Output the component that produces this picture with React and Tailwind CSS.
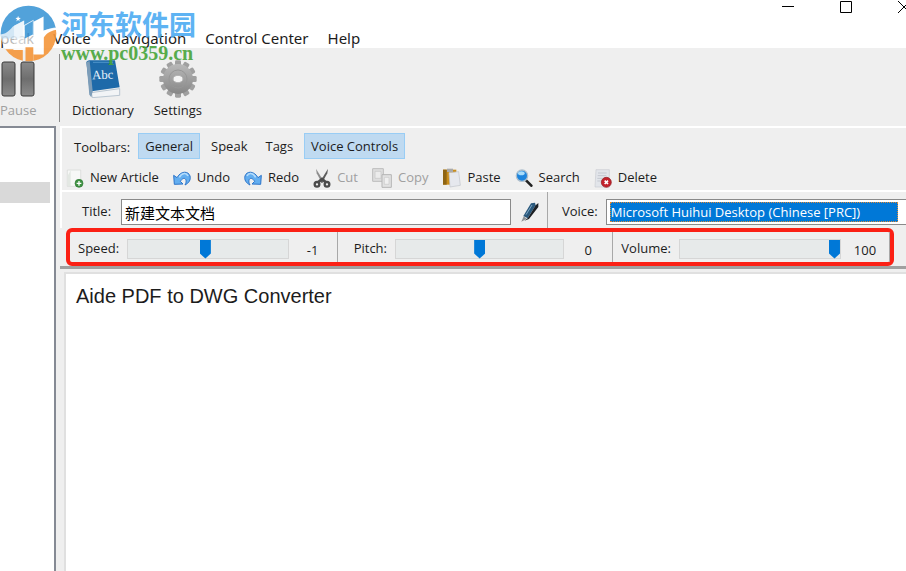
import React, { useState } from 'react';

const NewArticleIcon = () => (
  <svg viewBox="0 0 54 57" className="h-[19px] w-[18px] shrink-0">
    <path d="M4 3H44V52H4z" fill="#f7f8f7" stroke="#d3d6d3" strokeWidth="2" />
    <path d="M5 51V20L14 4v47z" fill="#e3e8e3" />
    <circle cx="39" cy="43" r="12" fill="#3f9142" stroke="#2f7a35" strokeWidth="2" />
    <path d="M39 36v14M32 43h14" stroke="#fff" strokeWidth="4" />
  </svg>
);

const UndoIcon = ({ flipped }) => (
  <svg viewBox="0 0 54 48" className="h-4 w-[18px] shrink-0">
    <g transform={flipped ? 'translate(54 0) scale(-1 1)' : undefined}>
      <path
        d="M2 16L4 43L30 42L22 34C27 26 34 22 38 28C41 34 39 39 36 45C48 39 54 29 51 18C47 4 25 0 12 23z"
        fill="#63aef0"
        stroke="#2c74c9"
        strokeWidth="3"
        strokeLinejoin="round"
      />
      <path d="M19 22C27 8 40 7 45 18" fill="none" stroke="#b5dcfb" strokeWidth="5" />
    </g>
  </svg>
);

const CutIcon = () => (
  <svg viewBox="0 0 54 60" className="h-5 w-[18px] shrink-0">
    <path d="M9 2L33 41L27 45L11 16z" fill="#8d8d8d" />
    <path d="M45 2L21 41L27 45L43 16z" fill="#5c5c5c" />
    <circle cx="12" cy="49" r="7" fill="none" stroke="#4c4c4c" strokeWidth="7" />
    <circle cx="42" cy="49" r="7" fill="none" stroke="#4c4c4c" strokeWidth="7" />
    <path d="M16 42l11-9 11 9" fill="none" stroke="#4c4c4c" strokeWidth="8" />
  </svg>
);

const CopyIcon = () => (
  <svg viewBox="0 0 60 60" className="size-5 shrink-0">
    <path d="M2 2H34V40H2z" fill="#dedede" stroke="#bcbcbc" strokeWidth="3" />
    <path d="M9 10h18v21H9z" fill="#ececec" stroke="#c4c4c4" strokeWidth="2" />
    <path d="M30 20H58V58H30z" fill="#e2e2e2" stroke="#b5b5b5" strokeWidth="3" />
    <path d="M37 28h14v21H37z" fill="#f0f0f0" stroke="#c8c8c8" strokeWidth="2" />
  </svg>
);

const PasteIcon = () => (
  <svg viewBox="0 0 57 60" className="h-5 w-[19px] shrink-0">
    <path d="M3 5H43V50H3z" fill="#c98d1c" />
    <path d="M3 5H14V50H3z" fill="#8f6514" />
    <path d="M15 2h18v10H15z" fill="#a9a9a9" />
    <path d="M21 14L50 11L55 52L24 57z" fill="#e6e8ee" stroke="#bfc2ca" strokeWidth="2" />
  </svg>
);

const SearchIcon = () => (
  <svg viewBox="0 0 54 54" className="size-[18px] shrink-0">
    <path d="M31 32L49 50" stroke="#222" strokeWidth="8" strokeLinecap="round" />
    <circle cx="21" cy="20" r="17" fill="#1d84dc" stroke="#aebfcd" strokeWidth="4" />
    <ellipse cx="19" cy="13" rx="10" ry="6" fill="#a9dcfa" />
  </svg>
);

const DeleteIcon = () => (
  <svg viewBox="0 0 54 57" className="h-[19px] w-[18px] shrink-0">
    <path d="M6 2H46V54H3z" fill="#e2e5ea" stroke="#c8ccd2" strokeWidth="2" />
    <path d="M12 12h26M11 20h26M10 28h16M10 36h12" stroke="#c3c7cf" strokeWidth="3" />
    <circle cx="37" cy="40" r="15" fill="#c3222c" stroke="#8e1a20" strokeWidth="2" />
    <path d="M32 35l10 10M42 35l-10 10" stroke="#fff" strokeWidth="5" />
  </svg>
);

const PenIcon = () => (
  <svg viewBox="0 0 54 60" className="h-5 w-[18px] shrink-0">
    <path d="M1 59L8 43L17 50z" fill="#8c9094" />
    <path d="M7 42L30 4L42 2L44 10L20 49z" fill="#2a587c" />
    <path d="M20 49L44 10L52 3V15L24 51L10 56z" fill="#1c1f24" />
    <path d="M15 38L33 9" stroke="#7fa7c4" strokeWidth="3" />
  </svg>
);

const PauseIcon = () => (
  <svg viewBox="0 0 36 38" className="h-[38px] w-9">
    <defs>
      <linearGradient id="pauseFill" x1="0" y1="0" x2="0" y2="1">
        <stop offset="0" stopColor="#8a8a8a" />
        <stop offset="0.5" stopColor="#6e6e6e" />
        <stop offset="1" stopColor="#8c8c8c" />
      </linearGradient>
    </defs>
    <rect x="2" y="2" width="13" height="34" rx="2" fill="url(#pauseFill)" stroke="#3b3b3b" />
    <rect x="21" y="2" width="13" height="34" rx="2" fill="url(#pauseFill)" stroke="#3b3b3b" />
  </svg>
);

const DictionaryIcon = () => (
  <svg viewBox="0 0 108 114" className="h-[38px] w-9">
    <path d="M19 98L104 86V106L22 113z" fill="#f2f4f6" stroke="#9fb0bf" strokeWidth="2" />
    <path d="M4 6C8 2 12 1 18 1H90L104 82L20 94L15 104z" fill="#1e6aa9" />
    <path d="M4 6L14 3L23 94L19 112L13 104z" fill="#7d9db8" />
    <path d="M24 7H84" stroke="#4d93c9" strokeWidth="3" />
    <text x="22" y="58" fontSize="38" fontFamily="Liberation Serif, serif" fill="#e6f2fb" transform="rotate(-2 22 58)">
      Abc
    </text>
  </svg>
);

const SettingsIcon = () => (
  <svg viewBox="-57 -57 114 114" className="size-[38px]">
    <defs>
      <linearGradient id="gearFill" x1="0" y1="0" x2="0" y2="1">
        <stop offset="0" stopColor="#b9b9b9" />
        <stop offset="1" stopColor="#868686" />
      </linearGradient>
    </defs>
    {[0, 30, 60, 90, 120, 150].map((angle) => (
      <rect key={angle} x="-9" y="-56" width="18" height="112" rx="4" fill="#a0a0a0" transform={`rotate(${angle})`} />
    ))}
    <circle r="45" fill="url(#gearFill)" />
    <circle r="27" fill="none" stroke="#979797" strokeWidth="3" />
    <ellipse rx="15" ry="11" fill="#f4f4f4" stroke="#b0b0b0" strokeWidth="3" />
  </svg>
);

const Watermark = () => (
  <div className="pointer-events-none absolute top-[5px] left-0 flex gap-1 opacity-90">
    <svg viewBox="0 0 170 170" className="size-[57px]">
      <defs>
        <clipPath id="logoClip">
          <circle cx="85" cy="85" r="83" />
        </clipPath>
      </defs>
      <g clipPath="url(#logoClip)">
        <path d="M0 0H170V68C140 72 118 80 98 92V60L72 76V100H0z" fill="#4098d6" />
        <path d="M0 88C26 86 30 70 42 62L72 46V135H0z" fill="#fff" fillOpacity="0.75" />
        <path d="M68 62L100 44V92C118 80 140 70 170 66V80L130 96V135H68z" fill="#fff" fillOpacity="0.8" />
        <path d="M74 62L98 48V88L74 100z" fill="#4098d6" />
        <path d="M0 132H40V170H0zM40 134H68V170H40zM76 126H100V170H76z" fill="#f5963a" />
        <path d="M130 98C140 82 155 76 170 74V170H100V146H130z" fill="#f5963a" />
        <path d="M100 50L130 34V148H100z" fill="#fff" />
        <path d="M42 62L72 46V134H42z" fill="#fff" fillOpacity="0.6" />
        <path d="M54 32l2 6 6 1-5 4 2 6-5-4-6 4 3-6-5-4 6-1z" fill="#fff" />
      </g>
    </svg>
    <div className="flex flex-col">
      <span className="font-['Noto_Sans_CJK_SC',sans-serif] text-[27px] leading-[38px] font-bold text-[#4dabf2]">河东软件园</span>
      <span className="font-['Liberation_Serif',serif] text-[20px] leading-5 font-bold text-[#47a53a]">www.pc0359.cn</span>
    </div>
  </div>
);

const actions = [
  { label: 'New Article', icon: <NewArticleIcon /> },
  { label: 'Undo', icon: <UndoIcon /> },
  { label: 'Redo', icon: <UndoIcon flipped /> },
  { label: 'Cut', icon: <CutIcon />, disabled: true },
  { label: 'Copy', icon: <CopyIcon />, disabled: true },
  { label: 'Paste', icon: <PasteIcon /> },
  { label: 'Search', icon: <SearchIcon /> },
  { label: 'Delete', icon: <DeleteIcon /> },
];

const VoiceSlider = ({ id, label, min, max, value, onChange, className = 'pl-2' }) => (
  <div className={`flex items-center border-r border-[#a8a8a8] pt-1 ${className}`}>
    <label htmlFor={id}>{label}:</label>
    <input
      id={id}
      type="range"
      min={min}
      max={max}
      value={value}
      onChange={(e) => onChange(Number(e.target.value))}
      className="ml-2 h-5 min-w-0 flex-1 appearance-none border border-[#d6d6d6] bg-[#e7eaea] [&::-webkit-slider-thumb]:h-[19px] [&::-webkit-slider-thumb]:w-[11px] [&::-webkit-slider-thumb]:appearance-none [&::-webkit-slider-thumb]:bg-[#0078d7] [&::-webkit-slider-thumb]:[clip-path:polygon(0_0,100%_0,100%_74%,50%_100%,0_74%)]"
    />
    <output htmlFor={id} className="w-12 pt-1 text-center">
      {value}
    </output>
  </div>
);

const App = () => {
  const [toolbars, setToolbars] = useState({ General: true, Speak: false, Tags: false, 'Voice Controls': true });
  const [title, setTitle] = useState('新建文本文档');
  const [speed, setSpeed] = useState(-1);
  const [pitch, setPitch] = useState(0);
  const [volume, setVolume] = useState(100);
  const [text, setText] = useState('Aide PDF to DWG Converter');

  const toggleToolbar = (name) => setToolbars({ ...toolbars, [name]: !toolbars[name] });

  return (
    <div className="relative flex h-screen flex-col overflow-hidden bg-[#efefef] font-['Open_Sans','Noto_Sans_CJK_SC',sans-serif] text-[13px] text-[#1c1c1c]">
      {/* Title bar and menu */}
      <header className="h-12 shrink-0 bg-white">
        <div className="-mr-1 flex h-7 items-start justify-end gap-[46px]">
          <button aria-label="Minimize">
            <svg viewBox="0 0 12 14" className="h-3.5 w-3">
              <path d="M0 6.5h12" stroke="#000" />
            </svg>
          </button>
          <button aria-label="Maximize">
            <svg viewBox="0 0 12 14" className="h-3.5 w-3">
              <path d="M.5 1.5h11v11H.5z" fill="none" stroke="#000" />
            </svg>
          </button>
          <button aria-label="Close">
            <svg viewBox="0 0 12 14" className="h-3.5 w-3">
              <path d="M0 1l12 12M12 1L0 13" stroke="#000" />
            </svg>
          </button>
        </div>
        <nav className="-ml-2 flex h-5 items-center gap-[19px] font-['Noto_Sans',sans-serif] text-[15px]">
          {['Speak', 'Voice', 'Navigation', 'Control Center', 'Help'].map((item) => (
            <button key={item}>{item}</button>
          ))}
        </nav>
      </header>

      {/* Main toolbar */}
      <div className="flex shrink-0 items-stretch pt-[6px] pb-1">
        <button disabled className="flex w-[59px] flex-col items-start pt-1.5 text-[#a0a0a0]">
          <PauseIcon />
          <span className="leading-6">Pause</span>
        </button>
        <div className="flex gap-5 border-l border-[#8c8c8c] pl-3">
          <button className="flex flex-col items-center pt-1.5">
            <DictionaryIcon />
            <span className="leading-6">Dictionary</span>
          </button>
          <button className="flex flex-col items-center pt-1.5">
            <SettingsIcon />
            <span className="leading-6">Settings</span>
          </button>
        </div>
      </div>

      <div className="flex min-h-0 flex-1">
        {/* Article list */}
        <aside className="w-14 shrink-0 border-t-2 border-r-2 border-[#858a94] bg-white pt-[54px]">
          <div className="mr-1 h-[21px] bg-[#d9d9d9]" />
        </aside>

        <main className="ml-1 flex min-w-0 flex-1 flex-col">
          <div className="flex flex-col gap-1.5 border-y-2 border-l-2 border-white pt-1">
            <div className="flex h-7 items-center gap-1 pl-3">
              <span className="mr-1 pt-1">Toolbars:</span>
              {Object.keys(toolbars).map((name) => (
                <button
                  key={name}
                  aria-pressed={toolbars[name]}
                  onClick={() => toggleToolbar(name)}
                  className={`h-[26px] border px-1.5 pt-0.5 ${toolbars[name] ? 'border-[#99cdf5] bg-[#bfdaf1]' : 'border-transparent'}`}
                >
                  {name}
                </button>
              ))}
            </div>
            <div className="flex h-6 items-center gap-3.5 pl-1">
              {actions.map(({ label, icon, disabled }) => (
                <button
                  key={label}
                  disabled={disabled}
                  className="flex items-center gap-1.5 whitespace-nowrap disabled:text-[#a0a0a0]"
                >
                  {icon}
                  {label}
                </button>
              ))}
            </div>
          </div>

          <div className="flex h-9 shrink-0 border-l-2 border-white">
            <div className="flex min-w-0 flex-[485] items-center border-r border-[#a8a8a8] pt-1 pl-5">
              <label htmlFor="title">Title:</label>
              <input
                id="title"
                value={title}
                onChange={(e) => setTitle(e.target.value)}
                className="ml-2.5 h-[26px] min-w-0 flex-1 border border-[#8a8a8a] bg-white px-[3px] text-[15px] text-black"
              />
              <button aria-label="Edit" className="pr-2 pl-2.5">
                <PenIcon />
              </button>
            </div>
            <div className="flex min-w-0 flex-[359] items-center pt-1 pl-3.5">
              <label htmlFor="voice">Voice:</label>
              <div className="ml-2 h-[26px] min-w-0 flex-1 border-y border-l border-[#8a8a8a] bg-white py-0.5 pr-2 pl-[3px]">
                <select
                  id="voice"
                  className="block h-5 w-full appearance-none border border-dotted border-[#e08a35] bg-[#0078d7] text-white"
                >
                  <option>Microsoft Huihui Desktop (Chinese [PRC])</option>
                </select>
              </div>
            </div>
          </div>

          {/* Voice controls */}
          <div className="mr-3 ml-1.5 grid h-[38px] shrink-0 grid-cols-[267fr_275fr_276fr] rounded-md border-4 border-[#fb2015]">
            <VoiceSlider id="speed" label="Speed" min={-30} max={30} value={speed} onChange={setSpeed} />
            <VoiceSlider id="pitch" label="Pitch" min={-10} max={10} value={pitch} onChange={setPitch} className="pl-4" />
            <VoiceSlider id="volume" label="Volume" min={0} max={100} value={volume} onChange={setVolume} />
          </div>

          <div className="h-[3px] shrink-0 bg-[#a0a0a0]" />
          <textarea
            aria-label="Article text"
            value={text}
            onChange={(e) => setText(e.target.value)}
            className="mt-[3px] ml-1 block min-h-0 flex-1 resize-none border-t-2 border-l-2 border-[#e0e0e0] bg-white px-2.5 py-2 font-['Liberation_Sans',sans-serif] text-[20px] leading-7 text-[#1c1c1c]"
          />
        </main>
      </div>

      <Watermark />
    </div>
  );
};

export default App;
